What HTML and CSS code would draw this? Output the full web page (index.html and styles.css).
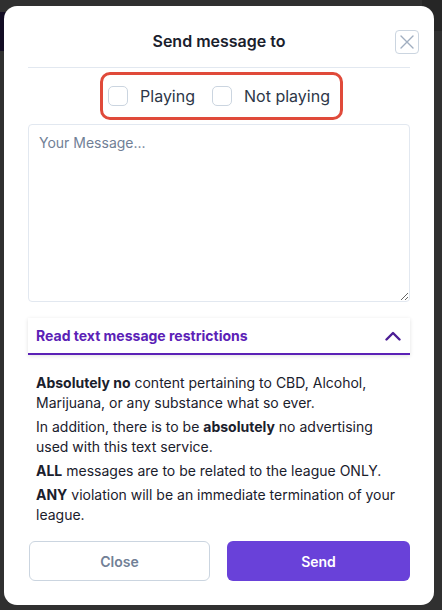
FILE: index.html
```html
<!DOCTYPE html>
<html lang="en">
<head>
<meta charset="utf-8">
<title>Send message</title>
<link rel="stylesheet" href="styles.css">
</head>
<body>
<div class="backdrop-nav"></div>
<div class="backdrop-right"></div>
<div class="modal">
  <header class="modal-header">
    <h2 class="modal-title">Send message to</h2>
    <button class="close-x" aria-label="Close">
      <svg width="16" height="16" viewBox="0 0 16 16"><path d="M2 2 L14 14 M14 2 L2 14" stroke="#a0aec0" stroke-width="1.4" fill="none" stroke-linecap="round"/></svg>
    </button>
  </header>
  <div class="recipients">
    <div class="recipient-box">
      <label class="check"><span class="box"></span><span>Playing</span></label>
      <label class="check"><span class="box"></span><span>Not playing</span></label>
    </div>
  </div>
  <textarea class="message" placeholder="Your Message..."></textarea>
  <div class="accordion">
    <div class="acc-head">
      <span>Read text message restrictions</span>
      <svg width="16" height="10" viewBox="0 0 16 10"><path d="M1.5 8.5 L8 2 L14.5 8.5" stroke="#4c1d95" stroke-width="2.4" fill="none" stroke-linecap="round" stroke-linejoin="round"/></svg>
    </div>
    <div class="acc-body">
      <p><b>Absolutely no</b> content pertaining to CBD, Alcohol, Marijuana, or any substance what so ever.</p>
      <p>In addition, there is to be <b>absolutely</b> no advertising used with this text service.</p>
      <p><b>ALL</b> messages are to be related to the league ONLY.</p>
      <p><b>ANY</b> violation will be an immediate termination of your league.</p>
    </div>
  </div>
  <div class="actions">
    <button class="btn btn-close">Close</button>
    <button class="btn btn-send">Send</button>
  </div>
</div>
</body>
</html>
```
FILE: styles.css
```css
* { box-sizing: border-box; }
html, body { margin: 0; padding: 0; }
body {
  background: #303030;
  font-family: Inter, "Noto Sans", sans-serif;
  width: 442px;
  height: 610px;
  overflow: hidden;
  position: relative;
  padding-top: 6px;
  padding-left: 4px;
}
.backdrop-nav {
  position: absolute;
  left: 0; top: 12px;
  width: 20px; height: 39px;
  background: #120d24;
}
.backdrop-right {
  position: absolute;
  right: 0; top: 0;
  width: 20px; height: 31px;
  background: #262626;
}
.modal {
  position: relative;
  width: 430px;
  height: 599px;
  background: #fff;
  border-radius: 13px;
  padding: 0 24px 24px;
  display: flex;
  flex-direction: column;
}
.modal-header {
  height: 62px;
  display: flex;
  align-items: center;
  justify-content: center;
  position: relative;
  border-bottom: 1px solid #e2e8f0;
  padding-top: 8px;
}
.modal-title {
  margin: 0;
  font-size: 16px;
  font-weight: 600;
  color: #1a202c;
}
.close-x {
  position: absolute;
  right: -9px;
  top: 24px;
  width: 24px;
  height: 24px;
  border: 1px solid #cbd5e0;
  border-radius: 4px;
  background: #fff;
  padding: 0;
  display: flex;
  align-items: center;
  justify-content: center;
}
.recipients {
  display: flex;
  justify-content: center;
  padding-top: 4px;
}
.recipient-box {
  display: flex;
  align-items: center;
  height: 48px;
  margin-left: 5px;
  padding: 0 10px 0 5px;
  border: 3px solid #e04a3a;
  border-radius: 10px;
  gap: 17px;
}
.check {
  display: flex;
  align-items: center;
  gap: 12px;
  font-size: 16px;
  color: #2d3748;
}
.box {
  width: 20px;
  height: 20px;
  border: 1px solid #cbd5e0;
  border-radius: 5px;
  background: #fff;
}
.message {
  margin-top: 4px;
  height: 178px;
  width: 382px;
  border: 1px solid #e2e8f0;
  border-radius: 4px;
  padding: 9px 10px;
  font-family: Inter, "Noto Sans", sans-serif;
  font-size: 14px;
  resize: vertical;
  outline: none;
}
.message::placeholder { color: #718096; }
.accordion {
  margin-top: 16px;
}
.acc-head {
  height: 37px;
  display: flex;
  align-items: center;
  justify-content: space-between;
  padding: 0 9px 0 8px;
  border-bottom: 2px solid #5b21b6;
  box-shadow: 0 1px 4px rgba(0,0,0,0.12);
  font-size: 14px;
  font-weight: 700;
  color: #5b21b6;
}
.acc-body {
  padding: 18px 8px 0;
  font-size: 14px;
  line-height: 20px;
  color: #1a202c;
}
.acc-body p { margin: 0 0 4px; }
.acc-body b { font-weight: 700; }
.actions {
  margin-top: auto;
  display: flex;
  gap: 17px;
}
.btn {
  height: 40px;
  border-radius: 6px;
  font-family: Inter, "Noto Sans", sans-serif;
  font-size: 14px;
  font-weight: 600;
}
.btn-close {
  flex: 0 0 181px;
  background: #fff;
  border: 1px solid #cbd5e0;
  color: #718096;
  margin-left: 1px;
}
.btn-send {
  flex: 1;
  background: #6941d9;
  border: none;
  color: #fff;
}
```
